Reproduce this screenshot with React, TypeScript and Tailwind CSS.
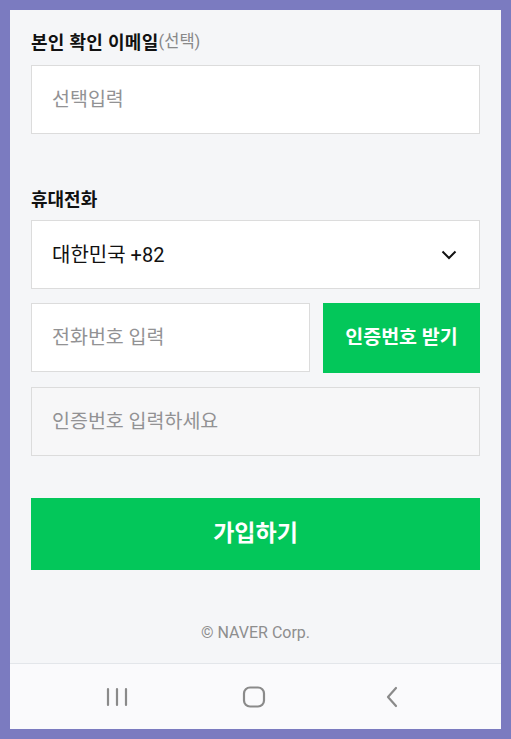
const font = { fontFamily: 'Roboto, "Noto Sans CJK KR", sans-serif' };

function Field({ placeholder, disabled }: { placeholder: string; disabled?: boolean }) {
  return (
    <div
      className={
        "flex h-[69px] items-center border border-[#dcdcdc] px-[20px] text-[19.5px] text-[#929294] " +
        (disabled ? "bg-[#f7f7f8]" : "bg-white")
      }
    >
      {placeholder}
    </div>
  );
}

export default function App() {
  return (
    <div className="h-[739px] w-[511px] bg-[#7b7bc0] p-[10px]" style={font}>
      <div className="flex h-full flex-col bg-[#f5f6f8]">
        <div className="px-[21px] pt-[21px]">
          <div className="mb-[12px] flex h-[22px] items-center text-[18px] font-bold tracking-[0.3px] text-[#111]">
            본인 확인 이메일
            <span className="text-[16.5px] font-normal tracking-normal text-[#888]">(선택)</span>
          </div>
          <Field placeholder="선택입력" />

          <div className="mb-[10px] mt-[54px] flex h-[22px] items-center text-[18px] font-bold text-[#111]">
            휴대전화
          </div>
          <div className="flex h-[69px] items-center justify-between border border-[#dcdcdc] bg-white pl-[20px] pr-[22px] text-[20px] text-[#111]">
            <span>대한민국 +82</span>
            <svg width="16" height="10" viewBox="0 0 16 10" fill="none">
              <path d="M1.5 1.5 8 8l6.5-6.5" stroke="#111" strokeWidth="2" />
            </svg>
          </div>

          <div className="mt-[14px] flex gap-[13px]">
            <div className="flex-1">
              <Field placeholder="전화번호 입력" />
            </div>
            <button className="h-[70px] w-[157px] bg-[#03c75a] text-[19.5px] font-bold text-white">
              인증번호 받기
            </button>
          </div>

          <div className="mt-[14px]">
            <Field placeholder="인증번호 입력하세요" disabled />
          </div>

          <button className="mt-[42px] h-[72px] w-full bg-[#03c75a] text-[23px] font-bold text-white">
            가입하기
          </button>

          <div className="mt-[51px] text-center text-[16px] text-[#8e8e8e]">© NAVER Corp.</div>
        </div>

        <div className="mt-auto flex h-[66px] items-center justify-center gap-[113px] border-t border-[#e3e6ea] bg-[#fafafc] pr-[3px]">
          <svg width="24" height="20" viewBox="0 0 24 20" fill="none">
            <path d="M3 2v16M12 2v16M21 2v16" stroke="#8a8a8a" strokeWidth="2.2" strokeLinecap="round" />
          </svg>
          <svg width="24" height="22" viewBox="0 0 24 22" fill="none">
            <rect x="2" y="1.5" width="20" height="19" rx="6" stroke="#8a8a8a" strokeWidth="2.2" />
          </svg>
          <svg width="24" height="22" viewBox="0 0 24 22" fill="none">
            <path d="M17 2 9 11l8 9" stroke="#8a8a8a" strokeWidth="2.2" strokeLinecap="round" strokeLinejoin="round" />
          </svg>
        </div>
      </div>
    </div>
  );
}
